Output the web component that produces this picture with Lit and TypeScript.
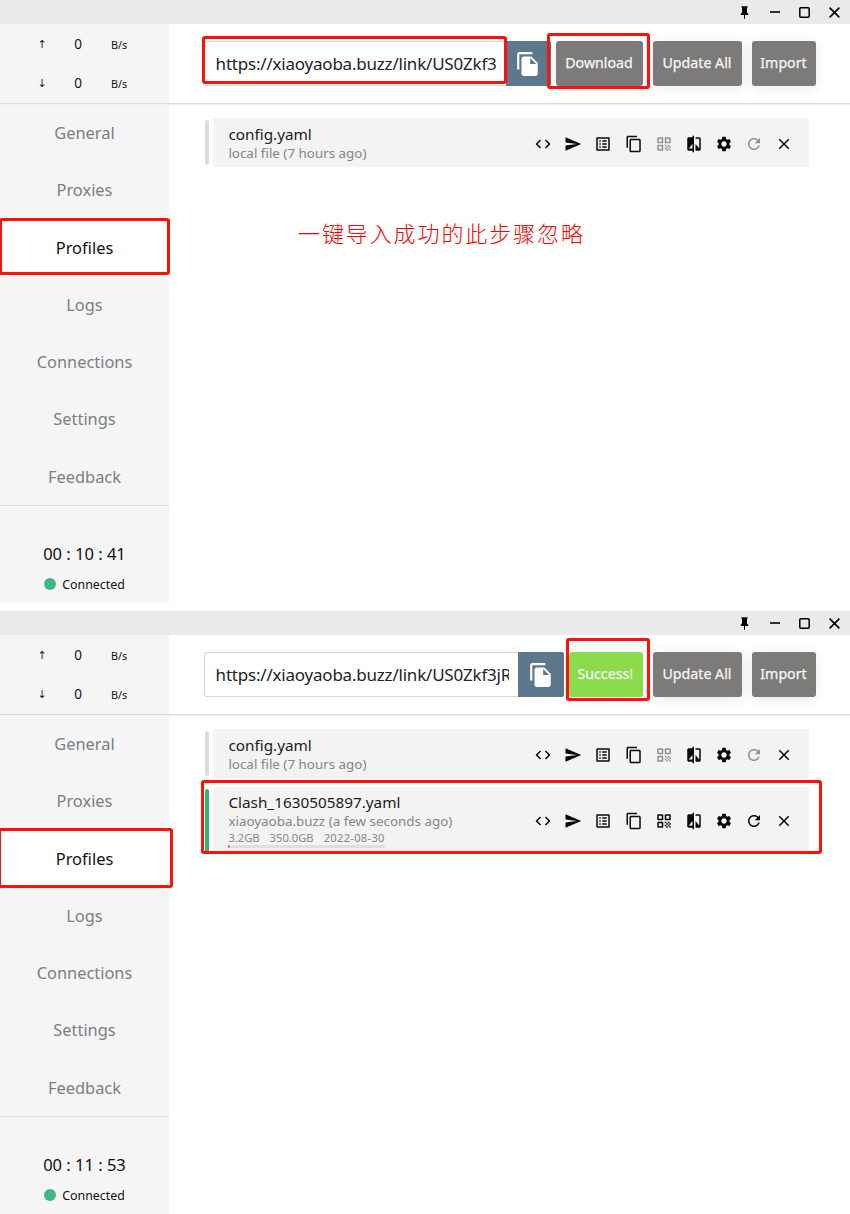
import { LitElement, html, css, svg, nothing } from "lit";
import { customElement, property } from "lit/decorators.js";
import { classMap } from "lit/directives/class-map.js";
import { styleMap } from "lit/directives/style-map.js";

const ICONS: Record<string, string> = {
  code: "M9.4 16.6L4.8 12l4.6-4.6L8 6l-6 6 6 6 1.4-1.4zm5.2 0l4.6-4.6-4.6-4.6L16 6l6 6-6 6-1.4-1.4z",
  send: "M2 21l21-9L2 3v7l15 2-15 2v7z",
  list: "M19 5v14H5V5h14m1.1-2H3.9c-.5 0-.9.4-.9.9v16.2c0 .4.4.9.9.9h16.2c.4 0 .9-.5.9-.9V3.9c0-.5-.5-.9-.9-.9zM11 7h6v2h-6V7zm0 4h6v2h-6v-2zm0 4h6v2h-6zM7 7h2v2H7zm0 4h2v2H7zm0 4h2v2H7z",
  copy: "M16 1H4c-1.1 0-2 .9-2 2v14h2V3h12V1zm3 4H8c-1.1 0-2 .9-2 2v14c0 1.1.9 2 2 2h11c1.1 0 2-.9 2-2V7c0-1.1-.9-2-2-2zm0 16H8V7h11v14z",
  qr: "M4 11h6c.6 0 1-.4 1-1V4c0-.6-.4-1-1-1H4c-.6 0-1 .4-1 1v6c0 .6.4 1 1 1zm1-6h4v4H5V5zM4 21h6c.6 0 1-.4 1-1v-6c0-.6-.4-1-1-1H4c-.6 0-1 .4-1 1v6c0 .6.4 1 1 1zm1-6h4v4H5v-4zM13 4v6c0 .6.4 1 1 1h6c.6 0 1-.4 1-1V4c0-.6-.4-1-1-1h-6c-.6 0-1 .4-1 1zm6 5h-4V5h4v4zM19 19h2v2h-2zM13 13h2v2h-2zM15 15h2v2h-2zM13 17h2v2h-2zM15 19h2v2h-2zM17 17h2v2h-2zM17 13h2v2h-2zM19 15h2v2h-2z",
  compare: "M10 3H5c-1.1 0-2 .9-2 2v14c0 1.1.9 2 2 2h5v2h2V1h-2v2zm0 15H5l5-6v6zm9-15h-5v2h5v13l-5-6v9h5c1.1 0 2-.9 2-2V5c0-1.1-.9-2-2-2z",
  settings: "M19.14 12.94c.04-.3.06-.61.06-.94 0-.32-.02-.64-.07-.94l2.03-1.58c.18-.14.23-.41.12-.61l-1.92-3.32c-.12-.22-.37-.29-.59-.22l-2.39.96c-.5-.38-1.03-.7-1.62-.94l-.36-2.54c-.04-.24-.24-.41-.48-.41h-3.84c-.24 0-.43.17-.47.41l-.36 2.54c-.59.24-1.13.57-1.62.94l-2.39-.96c-.22-.08-.47 0-.59.22L2.74 8.87c-.12.21-.08.47.12.61l2.03 1.58c-.05.3-.09.63-.09.94s.02.64.07.94l-2.03 1.58c-.18.14-.23.41-.12.61l1.92 3.32c.12.22.37.29.59.22l2.39-.96c.5.38 1.03.7 1.62.94l.36 2.54c.05.24.24.41.48.41h3.84c.24 0 .44-.17.47-.41l.36-2.54c.59-.24 1.13-.56 1.62-.94l2.39.96c.22.08.47 0 .59-.22l1.92-3.32c.12-.22.07-.47-.12-.61l-2.01-1.58zM12 15.6c-1.98 0-3.6-1.62-3.6-3.6s1.62-3.6 3.6-3.6 3.6 1.62 3.6 3.6-1.62 3.6-3.6 3.6z",
  refresh: "M17.65 6.35C16.2 4.9 14.21 4 12 4c-4.42 0-7.99 3.58-7.99 8s3.57 8 7.99 8c3.73 0 6.84-2.55 7.73-6h-2.08c-.82 2.33-3.04 4-5.65 4-3.31 0-6-2.69-6-6s2.69-6 6-6c1.66 0 3.14.69 4.22 1.78L13 11h7V4l-2.35 2.35z",
  close: "M19 6.41L17.59 5 12 10.59 6.41 5 5 6.41 10.59 12 5 17.59 6.41 19 12 13.41 17.59 19 19 17.59 13.41 12z",
  paste: "M16 1H4c-1.1 0-2 .9-2 2v14h2V3h12V1zm-1 4l6 6v10c0 1.1-.9 2-2 2H7.99C6.89 23 6 22.1 6 21l.01-14c0-1.1.89-2 1.99-2h7zm-1 7h5.5L14 6.5V12z",
  pin: "M16 12V4h1V2H7v2h1v8l-2 2v2h5.2v6h1.6v-6H18v-2l-2-2z",
};

const icon = (name: string, size: number) => html`
  <svg width=${size} height=${size} viewBox="0 0 24 24" fill="currentColor">
    ${svg`<path d=${ICONS[name]}></path>`}
  </svg>
`;

interface Profile {
  name: string;
  info: string;
  usage?: string[];
  active?: boolean;
  remote?: boolean;
}

interface Mark {
  left: number;
  top: number;
  width: number;
  height: number;
}

const NAV = ["General", "Proxies", "Profiles", "Logs", "Connections", "Settings", "Feedback"];
const ACTIONS = ["code", "send", "list", "copy", "qr", "compare", "settings", "refresh", "close"];

@customElement("profile-card")
class ProfileCard extends LitElement {
  @property({ attribute: false }) profile!: Profile;

  static styles = css`
    :host { display: block; }
    .row { display: flex; gap: 4px; }
    .row.tall .card { height: 67px; padding-top: 1px; }
    .row.tall .bar { margin-bottom: 0; }
    .bar { width: 4px; margin: 2px 0; border-radius: 2px; background: #dcdcdc; }
    .bar.active { background: #2fb574; }
    .card {
      flex: 1; height: 49px; box-sizing: border-box; padding: 1.6px 16px 0 15px;
      display: flex; align-items: center; justify-content: space-between;
      background: #f3f3f3; border-radius: 3px;
    }
    .text { display: flex; flex-direction: column; align-items: flex-start; white-space: nowrap; }
    .name { font-size: 15.3px; line-height: 19px; color: #1b1b1b; }
    .info { font-size: 13.4px; line-height: 19px; color: #858585; }
    .usage { display: flex; gap: 10px; font-size: 11.2px; line-height: 13px; color: #858585; }
    .usage span:last-child { letter-spacing: 0.27px; }
    .meter { width: 100%; height: 3px; margin-top: 1px; background: #dfdfdf; border-radius: 1px; }
    .used { height: 3px; background: #f56c6c; border-radius: 1px; }
    .actions { display: flex; gap: 12.1px; }
    svg { display: block; }
    .action { color: #0a0a0a; }
    .action.off { color: #909090; }
  `;

  render() {
    const p = this.profile;
    return html`
      <div class=${classMap({ row: true, tall: !!p.usage })}>
        <div class=${classMap({ bar: true, active: !!p.active })}></div>
        <div class="card">
          <div class="text">
            <span class="name">${p.name}</span>
            <span class="info">${p.info}</span>
            ${p.usage
              ? html`<div>
                  <div class="usage">${p.usage.map((u) => html`<span>${u}</span>`)}</div>
                  <div class="meter"><div class="used" style=${styleMap({ width: "1%" })}></div></div>
                </div>`
              : nothing}
          </div>
          <div class="actions">
            ${ACTIONS.map((a) => html`<span class=${classMap({
              action: true,
              off: !p.remote && (a === "qr" || a === "refresh"),
            })}>${icon(a, 18)}</span>`)}
          </div>
        </div>
      </div>
    `;
  }
}

@customElement("client-window")
class ClientWindow extends LitElement {
  @property() clock = "";
  @property({ type: Boolean }) done = false;
  @property({ attribute: false }) profiles: Profile[] = [];
  @property({ attribute: false }) marks: Mark[] = [];
  @property() url = "";
  @property() note = "";

  static styles = css`
    :host { display: block; position: relative; height: 603px; }
    svg { display: block; }
    .frame { display: flex; flex-direction: column; height: 603px; background: #fff; }
    .titlebar {
      height: 24px; background: #eaeaea; display: flex; align-items: center;
      justify-content: flex-end; gap: 12px; padding-right: 6.5px; color: #000;
    }
    .ctl { width: 18px; display: flex; justify-content: center; }
    .head { display: flex; height: 79px; border-bottom: 1px solid #dcdcdc; box-shadow: 0 1px 1px #f0f0f0; z-index: 1; }
    .traffic { flex: none; width: 169px; background: #f5f5f5; display: grid; grid-template-rows: 39px 39px; box-sizing: border-box; }
    .rate {
      display: grid; grid-template-columns: 22px 50px 32px; padding-left: 31px;
      align-items: center; text-align: center; color: #111;
    }
    .arrow { font: 11px "DejaVu Sans", sans-serif; color: #24123f; padding-top: 2px; }
    .num { font-size: 13.5px; }
    .unit { font-size: 10.8px; padding-top: 2px; }
    .toolbar { flex: 1; min-width: 0; display: flex; padding: 17px 34px 0 35px; align-items: flex-start; }
    .url {
      flex: 1; min-width: 0; height: 45px; box-sizing: border-box; border: 1px solid #d6d6d6; border-right: 0;
      border-radius: 3px 0 0 3px; padding: 0 9px 0 10.6px; font-size: 17px; line-height: 44px;
      letter-spacing: -0.21px; color: #222; white-space: nowrap;
    }
    .clip { overflow: hidden; }
    .paste {
      flex: none; width: 45.5px; height: 45px; background: #5d788c; color: #fff; display: flex;
      align-items: center; justify-content: center; margin-right: 5px; border-radius: 0 2px 2px 0;
    }
    .btn {
      flex: none; height: 45px; box-sizing: border-box; padding: 0 1px 2px 0; border-radius: 3px;
      background: #7d7b79; color: #f6f6f6; font-size: 14.2px;
      display: flex; align-items: center; justify-content: center; margin-right: 10px;
      box-shadow: 0 2px 14px rgba(0, 0, 0, 0.09); -webkit-text-stroke: 0.25px #f6f6f6;
    }
    .btn:last-child { margin-right: 0; }
    .w-download { width: 87px; }
    .w-success { width: 74.5px; background: #8bdc4d; }
    .w-update { width: 89px; }
    .w-import { width: 64px; }
    .body { flex: 1; display: flex; min-height: 0; }
    .side { width: 169px; display: flex; flex-direction: column; }
    .nav { display: flex; flex-direction: column; height: 401.6px; background: #fff; box-sizing: border-box; border-bottom: 1px solid #dcdcdc; }
    .item {
      flex: 1; display: flex; align-items: center; justify-content: center; background: #f5f5f5;
      color: #797f85; font-size: 16.4px;
    }
    .item.on { background: #fff; color: #111; }
    .item.before { border-bottom-right-radius: 8px; }
    .item.after { border-top-right-radius: 8px; }
    .status { flex: 1; background: #f5f5f5; display: flex; flex-direction: column; align-items: center; padding-top: 36.4px; color: #111; }
    .clock { font-size: 16.5px; line-height: 24px; white-space: nowrap; }
    .conn { display: flex; align-items: center; gap: 6px; font-size: 12.4px; line-height: 18px; margin-top: 9px; }
    .label { padding-top: 1px; }
    .dot { width: 12px; height: 12px; border-radius: 50%; background: #41b883; }
    .list { flex: 1; padding: 14.4px 41px 0 36.4px; display: flex; flex-direction: column; gap: 8.4px; }
    .mark { position: absolute; box-sizing: border-box; border: 3px solid #fb120a; border-radius: 3px; z-index: 2; }
    .note {
      position: absolute; left: 298px; top: 215px; z-index: 2; color: #f00; white-space: nowrap;
      font: 300 22px/34px "Noto Sans CJK SC", sans-serif; letter-spacing: 1.9px;
    }
  `;

  render() {
    const on = NAV.indexOf("Profiles");
    return html`
      <div class="frame">
        <div class="titlebar">
          <span class="ctl">${icon("pin", 15)}</span>
          <span class="ctl"><svg width="10" height="10"><path d="M0 5h10" stroke="#000" stroke-width="1.6"></path></svg></span>
          <span class="ctl"><svg width="11" height="11"><rect x=".8" y=".8" width="9.4" height="9.4" rx="1" fill="none" stroke="#000" stroke-width="1.5"></rect></svg></span>
          <span class="ctl"><svg width="11" height="11"><path d="M.6 .6l9.8 9.8M10.4 .6L.6 10.4" stroke="#000" stroke-width="1.6"></path></svg></span>
        </div>
        <div class="head">
          <div class="traffic">
            ${["↑", "↓"].map((a) => html`<div class="rate">
              <span class="arrow">${a}</span><span class="num">0</span><span class="unit">B/s</span>
            </div>`)}
          </div>
          <div class="toolbar">
            <div class="url"><div class="clip">${this.url}</div></div>
            <div class="paste">${icon("paste", 26)}</div>
            ${this.done
              ? html`<div class="btn w-success">Success!</div>`
              : html`<div class="btn w-download">Download</div>`}
            <div class="btn w-update">Update All</div>
            <div class="btn w-import">Import</div>
          </div>
        </div>
        <div class="body">
          <div class="side">
            <div class="nav">
              ${NAV.map((n, i) => html`<div class=${classMap({
                item: true, on: i === on, before: i === on - 1, after: i === on + 1,
              })}>${n}</div>`)}
            </div>
            <div class="status">
              <div class="clock">${this.clock}</div>
              <div class="conn"><span class="dot"></span><span class="label">Connected</span></div>
            </div>
          </div>
          <div class="list">
            ${this.profiles.map((p) => html`<profile-card .profile=${p}></profile-card>`)}
          </div>
        </div>
      </div>
      ${this.note ? html`<div class="note">${this.note}</div>` : nothing}
      ${this.marks.map((m) => html`<div class="mark" style=${styleMap({
        left: `${m.left}px`, top: `${m.top}px`, width: `${m.width}px`, height: `${m.height}px`,
      })}></div>`)}
    `;
  }
}

const LOCAL: Profile = { name: "config.yaml", info: "local file (7 hours ago)" };
const REMOTE: Profile = {
  name: "Clash_1630505897.yaml",
  info: "xiaoyaoba.buzz (a few seconds ago)",
  usage: ["3.2GB", "350.0GB", "2022-08-30"],
  active: true,
  remote: true,
};

@customElement("app-root")
class AppRoot extends LitElement {
  static styles = css`
    :host {
      display: flex; flex-direction: column; gap: 8px; width: 850px; height: 1214px;
      overflow: hidden; background: #fff; font-family: "Noto Sans", "Open Sans", sans-serif;
    }
  `;

  render() {
    return html`
      <client-window
        clock="00 : 10 : 41"
        url="https://xiaoyaoba.buzz/link/US0Zkf3"
        note="一键导入成功的此步骤忽略"
        .profiles=${[LOCAL]}
        .marks=${[
          { left: 202, top: 36, width: 305, height: 48 },
          { left: 547, top: 33, width: 103, height: 56 },
          { left: -1, top: 218, width: 171, height: 57 },
        ]}
      ></client-window>
      <client-window
        clock="00 : 11 : 53"
        url="https://xiaoyaoba.buzz/link/US0Zkf3jR"
        done
        .profiles=${[LOCAL, REMOTE]}
        .marks=${[
          { left: 566, top: 27, width: 84, height: 63 },
          { left: 201, top: 169, width: 621, height: 74 },
          { left: -2, top: 217, width: 175, height: 60 },
        ]}
      ></client-window>
    `;
  }
}
